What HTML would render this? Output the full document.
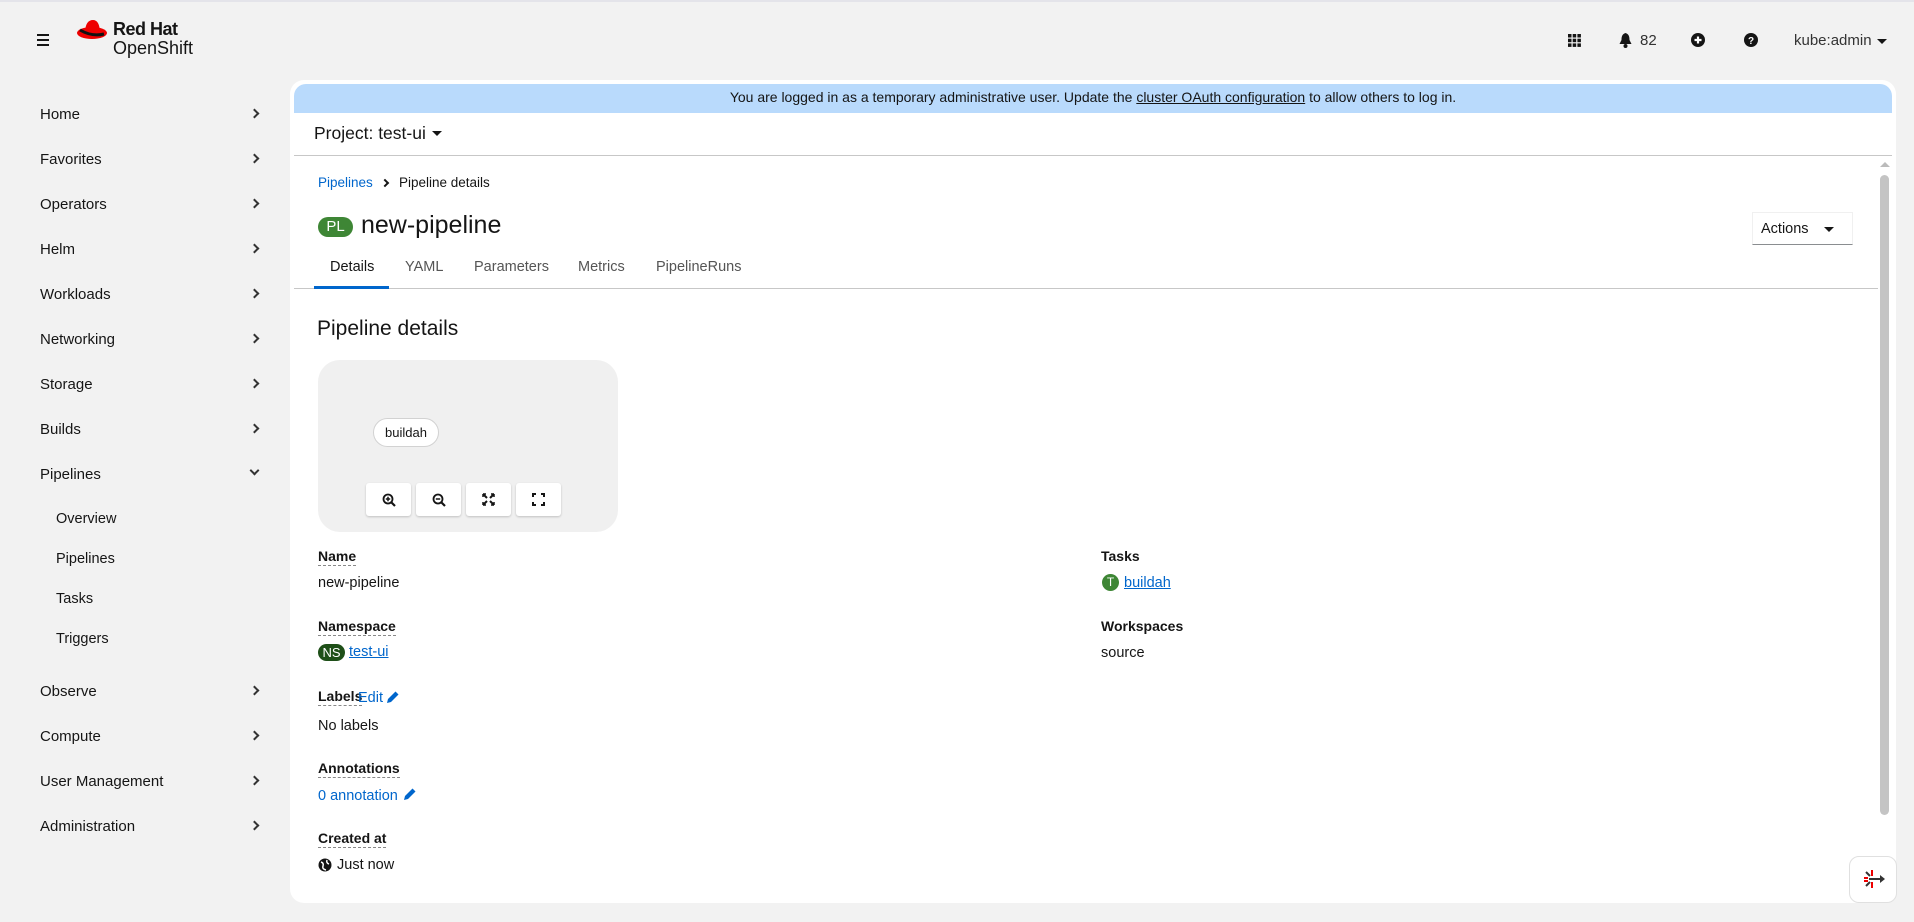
<!DOCTYPE html>
<html><head><meta charset="utf-8"><style>
*{box-sizing:border-box;margin:0;padding:0}
body{width:1914px;height:922px;background:#f2f2f2;font-family:"Liberation Sans",sans-serif;color:#151515;position:relative;overflow:hidden}
.a{position:absolute;white-space:nowrap}
.nav{font-size:15px;color:#151515}
.chev{position:absolute;left:251px;width:7px;height:7px;border-right:2px solid #333;border-top:2px solid #333;transform:rotate(45deg)}
.lbl{font-size:14px;font-weight:bold;border-bottom:1px dashed #888;padding-bottom:1px}
.val{font-size:14.5px}
.link{color:#0066cc}
.btn{position:absolute;top:483px;width:45px;height:33px;background:#fff;border-radius:3px;box-shadow:0 1px 2px rgba(0,0,0,.2);display:flex;align-items:center;justify-content:center}
</style></head><body>
<div class="a" style="left:0;top:0;width:1914px;height:2px;background:#e4e4ea"></div>
<div class="a" style="left:37px;top:34px;width:12px;height:2px;background:#151515"></div>
<div class="a" style="left:37px;top:39px;width:12px;height:2px;background:#151515"></div>
<div class="a" style="left:37px;top:44px;width:12px;height:2px;background:#151515"></div>
<svg class="a" style="left:76px;top:17px" width="36" height="26" viewBox="0 0 36 26"><ellipse cx="16" cy="16" rx="15" ry="6" fill="#e00"/><path d="M9 14 Q10 3 17 3 Q23 3 24 14 Z" fill="#e00"/><path d="M4 13 Q16 20 28 17" stroke="#111" stroke-width="3" fill="none"/></svg>
<div class="a" style="left:113px;top:19px;font-size:18px;font-weight:bold;letter-spacing:-.5px">Red Hat</div>
<div class="a" style="left:113px;top:38px;font-size:18px">OpenShift</div>
<svg class="a" style="left:1568px;top:34px" width="13" height="13" viewBox="0 0 13 13" fill="#151515"><rect x="0" y="0" width="3.5" height="3.5"/><rect x="4.7" y="0" width="3.5" height="3.5"/><rect x="9.4" y="0" width="3.5" height="3.5"/><rect x="0" y="4.7" width="3.5" height="3.5"/><rect x="4.7" y="4.7" width="3.5" height="3.5"/><rect x="9.4" y="4.7" width="3.5" height="3.5"/><rect x="0" y="9.4" width="3.5" height="3.5"/><rect x="4.7" y="9.4" width="3.5" height="3.5"/><rect x="9.4" y="9.4" width="3.5" height="3.5"/></svg>
<svg class="a" style="left:1619px;top:33px" width="13" height="15" viewBox="0 0 13 15" fill="#151515"><path d="M6.5 0 C3 1 2.5 4 2.5 7 L0.5 11 H12.5 L10.5 7 C10.5 4 10 1 6.5 0Z"/><circle cx="6.5" cy="13" r="2"/></svg>
<div class="a" style="left:1640px;top:32px;font-size:15px;color:#333">82</div>
<svg class="a" style="left:1691px;top:33px" width="14" height="14" viewBox="0 0 14 14"><circle cx="7" cy="7" r="7" fill="#151515"/><path d="M7 3.5V10.5M3.5 7H10.5" stroke="#fff" stroke-width="2.2"/></svg>
<svg class="a" style="left:1744px;top:33px" width="14" height="14" viewBox="0 0 14 14"><circle cx="7" cy="7" r="7" fill="#151515"/><text x="7" y="11" text-anchor="middle" font-size="10" font-weight="bold" fill="#fff" font-family="Liberation Sans">?</text></svg>
<div class="a" style="left:1794px;top:32px;font-size:15px;color:#333">kube:admin</div>
<div class="a" style="left:1877px;top:39px;border-left:5px solid transparent;border-right:5px solid transparent;border-top:5px solid #151515"></div>
<div class="a nav" style="left:40px;top:106px">Home</div><div class="chev" style="top:110px"></div>
<div class="a nav" style="left:40px;top:151px">Favorites</div><div class="chev" style="top:155px"></div>
<div class="a nav" style="left:40px;top:196px">Operators</div><div class="chev" style="top:200px"></div>
<div class="a nav" style="left:40px;top:241px">Helm</div><div class="chev" style="top:245px"></div>
<div class="a nav" style="left:40px;top:286px">Workloads</div><div class="chev" style="top:290px"></div>
<div class="a nav" style="left:40px;top:331px">Networking</div><div class="chev" style="top:335px"></div>
<div class="a nav" style="left:40px;top:376px">Storage</div><div class="chev" style="top:380px"></div>
<div class="a nav" style="left:40px;top:421px">Builds</div><div class="chev" style="top:425px"></div>
<div class="a nav" style="left:40px;top:466px">Pipelines</div><div class="chev" style="top:467px;transform:rotate(135deg)"></div>
<div class="a nav" style="left:56px;top:511px;font-size:14.5px">Overview</div>
<div class="a nav" style="left:56px;top:551px;font-size:14.5px">Pipelines</div>
<div class="a nav" style="left:56px;top:591px;font-size:14.5px">Tasks</div>
<div class="a nav" style="left:56px;top:631px;font-size:14.5px">Triggers</div>
<div class="a nav" style="left:40px;top:683px">Observe</div><div class="chev" style="top:687px"></div>
<div class="a nav" style="left:40px;top:728px">Compute</div><div class="chev" style="top:732px"></div>
<div class="a nav" style="left:40px;top:773px">User Management</div><div class="chev" style="top:777px"></div>
<div class="a nav" style="left:40px;top:818px">Administration</div><div class="chev" style="top:822px"></div>
<div class="a" style="left:290px;top:80px;width:1606px;height:823px;background:#fff;border-radius:14px"></div>
<div class="a" style="left:294px;top:84px;width:1598px;height:29px;background:#b9dafc;border-radius:12px 12px 0 0"></div>
<div class="a" style="left:294px;top:89px;width:1598px;text-align:center;font-size:14px;color:#151515">You are logged in as a temporary administrative user. Update the <span style="text-decoration:underline">cluster OAuth configuration</span> to allow others to log in.</div>
<div class="a" style="left:314px;top:123px;font-size:17.5px">Project: test-ui</div>
<div class="a" style="left:432px;top:131px;border-left:5px solid transparent;border-right:5px solid transparent;border-top:5px solid #151515"></div>
<div class="a" style="left:294px;top:155px;width:1598px;height:1px;background:#c7c7c7"></div>
<div class="a" style="left:1880px;top:162px;border-left:5px solid transparent;border-right:5px solid transparent;border-bottom:5px solid #bbb"></div>
<div class="a" style="left:1880px;top:175px;width:9px;height:640px;background:#c4c4c4;border-radius:5px"></div>
<div class="a link" style="left:318px;top:175px;font-size:13.5px">Pipelines</div>
<div class="a" style="left:382px;top:180px;width:6px;height:6px;border-right:2px solid #151515;border-top:2px solid #151515;transform:rotate(45deg)"></div>
<div class="a" style="left:399px;top:175px;font-size:13.5px;color:#151515">Pipeline details</div>
<div class="a" style="left:318px;top:217px;width:35px;height:20px;background:#3e8635;border-radius:10px;color:#fff;font-size:15px;text-align:center;line-height:20px">PL</div>
<div class="a" style="left:361px;top:211px;font-size:25px">new-pipeline</div>
<div class="a" style="left:1752px;top:212px;width:101px;height:33px;border:1px solid #f0f0f0;border-bottom:1px solid #8a8d90"></div>
<div class="a" style="left:1761px;top:221px;font-size:14.5px">Actions</div>
<div class="a" style="left:1824px;top:227px;border-left:5px solid transparent;border-right:5px solid transparent;border-top:5px solid #151515"></div>
<div class="a" style="left:294px;top:288px;width:1584px;height:1px;background:#c7c7c7"></div>
<div class="a" style="left:314px;top:286px;width:75px;height:3px;background:#0066cc"></div>
<div class="a" style="left:330px;top:259px;font-size:14.5px;color:#151515">Details</div>
<div class="a" style="left:405px;top:259px;font-size:14.5px;color:#555">YAML</div>
<div class="a" style="left:474px;top:259px;font-size:14.5px;color:#555">Parameters</div>
<div class="a" style="left:578px;top:259px;font-size:14.5px;color:#555">Metrics</div>
<div class="a" style="left:656px;top:259px;font-size:14.5px;color:#555">PipelineRuns</div>
<div class="a" style="left:317px;top:317px;font-size:21px">Pipeline details</div>
<div class="a" style="left:318px;top:360px;width:300px;height:172px;background:#f0f0f0;border-radius:22px"></div>
<div class="a" style="left:373px;top:418px;width:66px;height:29px;background:#fff;border:1px solid #d2d2d2;border-radius:15px;font-size:13px;text-align:center;line-height:27px">buildah</div>
<div class="btn" style="left:366px"><svg width="14" height="14" viewBox="0 0 14 14"><circle cx="6" cy="6" r="4.5" stroke="#151515" stroke-width="1.8" fill="none"/><path d="M9.5 9.5L13 13" stroke="#151515" stroke-width="2.2"/><path d="M6 3.8V8.2M3.8 6H8.2" stroke="#151515" stroke-width="1.5"/></svg></div>
<div class="btn" style="left:416px"><svg width="14" height="14" viewBox="0 0 14 14"><circle cx="6" cy="6" r="4.5" stroke="#151515" stroke-width="1.8" fill="none"/><path d="M9.5 9.5L13 13" stroke="#151515" stroke-width="2.2"/><path d="M3.8 6H8.2" stroke="#151515" stroke-width="1.5"/></svg></div>
<div class="btn" style="left:466px"><svg width="13" height="13" viewBox="0 0 13 13" stroke="#151515" stroke-width="2"><path d="M1 1L5 5M12 1L8 5M1 12L5 8M12 12L8 8"/><path d="M1 1h3M1 1v3M12 1h-3M12 1v3M1 12h3M1 12v-3M12 12h-3M12 12v-3" stroke-width="1.5"/></svg></div>
<div class="btn" style="left:516px"><svg width="13" height="13" viewBox="0 0 13 13" fill="none" stroke="#151515" stroke-width="2"><path d="M1 4V1H4M9 1H12V4M12 9V12H9M4 12H1V9"/></svg></div>
<div class="a lbl" style="left:318px;top:548px">Name</div>
<div class="a val" style="left:318px;top:575px">new-pipeline</div>
<div class="a lbl" style="left:318px;top:618px">Namespace</div>
<div class="a" style="left:318px;top:644px;width:27px;height:17px;background:#1e4f18;border-radius:9px;color:#fff;font-size:13px;text-align:center;line-height:17px">NS</div>
<div class="a val link" style="left:349px;top:644px;text-decoration:underline">test-ui</div>
<div class="a lbl" style="left:318px;top:688px">Labels</div>
<div class="a val link" style="left:358px;top:690px">Edit</div>
<svg class="a" style="left:386px;top:690px" width="14" height="14" viewBox="0 0 14 14"><path d="M1 13L2 9 9.5 1.5 12.5 4.5 5 12Z" fill="#0066cc"/></svg>
<div class="a val" style="left:318px;top:718px">No labels</div>
<div class="a lbl" style="left:318px;top:760px">Annotations</div>
<div class="a val link" style="left:318px;top:788px">0 annotation</div>
<svg class="a" style="left:403px;top:787px" width="14" height="14" viewBox="0 0 14 14"><path d="M1 13L2 9 9.5 1.5 12.5 4.5 5 12Z" fill="#0066cc"/></svg>
<div class="a lbl" style="left:318px;top:830px">Created at</div>
<svg class="a" style="left:318px;top:858px" width="14" height="14" viewBox="0 0 14 14"><circle cx="7" cy="7" r="6.5" fill="#151515"/><path d="M3 4Q6 5 5 8T8 12M9 2Q8 5 11 6" stroke="#fff" stroke-width="1.5" fill="none"/></svg>
<div class="a val" style="left:337px;top:857px">Just now</div>
<div class="a lbl" style="left:1101px;top:548px;border:none">Tasks</div>
<div class="a" style="left:1102px;top:574px;width:17px;height:17px;background:#3e8635;border-radius:50%;color:#fff;font-size:12px;text-align:center;line-height:17px">T</div>
<div class="a val link" style="left:1124px;top:575px;text-decoration:underline">buildah</div>
<div class="a lbl" style="left:1101px;top:618px;border:none">Workspaces</div>
<div class="a val" style="left:1101px;top:645px">source</div>
<div class="a" style="left:1849px;top:856px;width:48px;height:47px;background:#fff;border:1px solid #e0e0e0;border-radius:10px"></div>
<svg class="a" style="left:1856px;top:862px" width="34" height="34" viewBox="0 0 34 34"><path d="M13 17H27" stroke="#333" stroke-width="2"/><path d="M24 13L29 17L24 21Z" fill="#333"/><path d="M16 8V14M16 20V26M8 16H12M8 19H12" stroke="#e00" stroke-width="2"/><path d="M10 10L14 14M10 24L14 20" stroke="#333" stroke-width="2"/></svg>
</body></html>
